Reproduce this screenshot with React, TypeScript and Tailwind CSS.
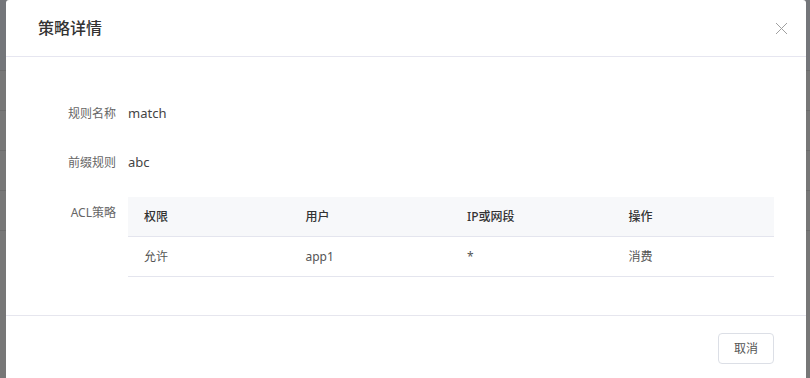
const FONT = { fontFamily: '"Noto Sans", "Noto Sans CJK SC", sans-serif' };

const columns = ["权限", "用户", "IP或网段", "操作"];
const rows = [["允许", "app1", "*", "消费"]];

function CloseIcon() {
  return (
    <svg width="13" height="13" viewBox="0 0 13 13" fill="none">
      <path d="M1 1L12 12M12 1L1 12" stroke="#a0a0a0" strokeWidth="1" />
    </svg>
  );
}

function Field({ label, value, className }: { label: string; value: string; className?: string }) {
  return (
    <div className={`flex items-center h-[32px] ${className ?? ""}`}>
      <div className="w-[110px] shrink-0 text-right text-[12px] text-[#666]">{label}</div>
      <div className="ml-[12px] text-[13px] text-[#444]">{value}</div>
    </div>
  );
}

export default function App() {
  return (
    <div className="relative w-[810px] h-[378px] overflow-hidden bg-[#777777]" style={FONT}>
      {/* page behind the overlay */}
      <div className="flex flex-col">
        <div className="h-[71px] bg-[#74767a] border-b border-[#6c6c6c]" />
        <div className="h-[40px] border-b border-[#6c6c6c]" />
        <div className="h-[40px] border-b border-[#6c6c6c]" />
        <div className="h-[40px] border-b border-[#6c6c6c]" />
        <div className="h-[40px] border-b border-[#6c6c6c]" />
      </div>

      <div className="absolute left-[6px] top-0 w-[800px] h-[420px] bg-white rounded-t-[3px] flex flex-col">
        <div className="h-[57px] shrink-0 flex items-center justify-between pl-[32px] pr-[18px] border-b border-[#e6e6f0]">
          <span className="text-[16px] font-medium text-[#333]">策略详情</span>
          <CloseIcon />
        </div>

        <div className="pt-[41px] pb-[38px] pr-[32px] border-b border-[#e6e6ee]">
          <Field label="规则名称" value="match" className="mb-[17px]" />
          <Field label="前缀规则" value="abc" className="mb-[18px]" />
          <div className="flex items-start">
            <div className="w-[110px] shrink-0 text-right text-[12px] text-[#666] pt-[7px]">ACL策略</div>
            <div className="ml-[12px] w-[646px]">
              <div className="grid grid-cols-4 h-[40px] items-center bg-[#f7f8fa] border-b border-[#e4e5ee]">
                {columns.map((c) => (
                  <div key={c} className="pl-[16px] text-[12px] font-medium text-[#333]">
                    {c}
                  </div>
                ))}
              </div>
              {rows.map((r, i) => (
                <div key={i} className="grid grid-cols-4 h-[40px] items-center border-b border-[#e4e5ee]">
                  {r.map((v, j) => (
                    <div key={j} className="pl-[16px] text-[12px] text-[#555]">
                      {v}
                    </div>
                  ))}
                </div>
              ))}
            </div>
          </div>
        </div>

        <div className="flex justify-end pt-[17px] pr-[32px]">
          <button className="h-[31px] w-[56px] rounded-[4px] border border-[#dcdfe6] bg-white text-[12px] text-[#555]">
            取消
          </button>
        </div>
      </div>
    </div>
  );
}
